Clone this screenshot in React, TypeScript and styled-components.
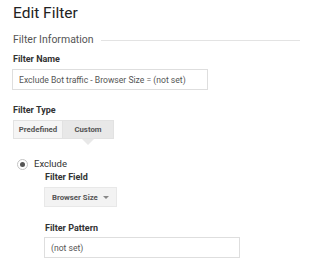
import React from "react";
import styled, { createGlobalStyle } from "styled-components";

const Global = createGlobalStyle`
  html, body { margin: 0; padding: 0; background: #fff; }
  body { font-family: Roboto, "Liberation Sans", Arial, sans-serif; color: #333; }
`;

const Page = styled.div`
  width: 300px;
  height: 268px;
  overflow: hidden;
  padding: 0 0 0 13px;
  box-sizing: border-box;
  white-space: nowrap;
`;

const Title = styled.h1`
  margin: 0;
  padding-top: 3px;
  font-size: 15.5px;
  font-weight: 400;
  line-height: 20px;
  color: #222;
`;

const SectionHead = styled.div`
  display: flex;
  align-items: center;
  gap: 7px;
  margin-top: 10px;
  font-size: 10.5px;
  line-height: 14px;
  color: #555;
  &::after {
    content: "";
    flex: 1;
    height: 1px;
    background: #e3e3e3;
  }
`;

const Label = styled.div<{ $top: number }>`
  margin-top: ${(p) => p.$top}px;
  font-size: 9px;
  font-weight: 700;
  line-height: 12px;
  color: #333;
`;

const TextBox = styled.div<{ $w: number; $top?: number }>`
  box-sizing: border-box;
  width: ${(p) => p.$w}px;
  height: 21px;
  margin-top: ${(p) => p.$top ?? 5}px;
  margin-left: -1px;
  border: 1px solid #dedede;
  padding: 0 6px;
  display: flex;
  align-items: center;
  font-size: 8.6px;
  color: #555;
`;

const Toggle = styled.div`
  display: flex;
  margin-top: 4px;
`;

const ToggleBtn = styled.div<{ $active?: boolean; $w: number }>`
  position: relative;
  box-sizing: border-box;
  width: ${(p) => p.$w}px;
  height: 19px;
  display: flex;
  align-items: center;
  justify-content: center;
  font-size: 7.8px;
  font-weight: 700;
  color: #555;
  background: ${(p) => (p.$active ? "#e8e8e8" : "#f5f5f5")};
  border: 1px solid #e2e2e2;
  & + & { border-left: none; }
  ${(p) =>
    p.$active &&
    `&::after {
      content: "";
      position: absolute;
      left: 50%;
      bottom: -7px;
      margin-left: -6px;
      border-left: 6px solid transparent;
      border-right: 6px solid transparent;
      border-top: 6px solid #e8e8e8;
    }`}
`;

const RadioRow = styled.div`
  display: flex;
  align-items: center;
  gap: 6px;
  margin-top: 19px;
  padding-left: 4px;
  font-size: 9.5px;
  color: #333;
  line-height: 12px;
`;

const Radio = styled.span`
  box-sizing: border-box;
  width: 11px;
  height: 11px;
  border-radius: 50%;
  border: 1px solid #c4c4c4;
  display: flex;
  align-items: center;
  justify-content: center;
  &::after {
    content: "";
    width: 5px;
    height: 5px;
    border-radius: 50%;
    background: #555;
  }
`;

const Indent = styled.div`
  padding-left: 32px;
`;

const Dropdown = styled.div`
  box-sizing: border-box;
  width: 73px;
  height: 20px;
  margin-top: 4px;
  margin-left: -1px;
  display: flex;
  align-items: center;
  justify-content: space-between;
  padding: 0 7px;
  background: #f3f3f3;
  border: 1px solid #e8e8e8;
  font-size: 7.8px;
  font-weight: 700;
  color: #555;
  &::after {
    content: "";
    border-left: 3px solid transparent;
    border-right: 3px solid transparent;
    border-top: 3px solid #888;
    margin-top: 1px;
  }
`;

export default function App() {
  return (
    <>
      <Global />
      <Page>
        <Title>Edit Filter</Title>
        <SectionHead>Filter Information</SectionHead>
        <Label $top={6}>Filter Name</Label>
        <TextBox $w={196} $top={4}>Exclude Bot traffic - Browser Size = (not set)</TextBox>
        <Label $top={14}>Filter Type</Label>
        <Toggle>
          <ToggleBtn $w={50}>Predefined</ToggleBtn>
          <ToggleBtn $w={51} $active>Custom</ToggleBtn>
        </Toggle>
        <RadioRow>
          <Radio />
          Exclude
        </RadioRow>
        <Indent>
          <Label $top={1}>Filter Field</Label>
          <Dropdown>Browser Size</Dropdown>
          <Label $top={15}>Filter Pattern</Label>
          <TextBox $w={196} $top={3}>(not set)</TextBox>
        </Indent>
      </Page>
    </>
  );
}
